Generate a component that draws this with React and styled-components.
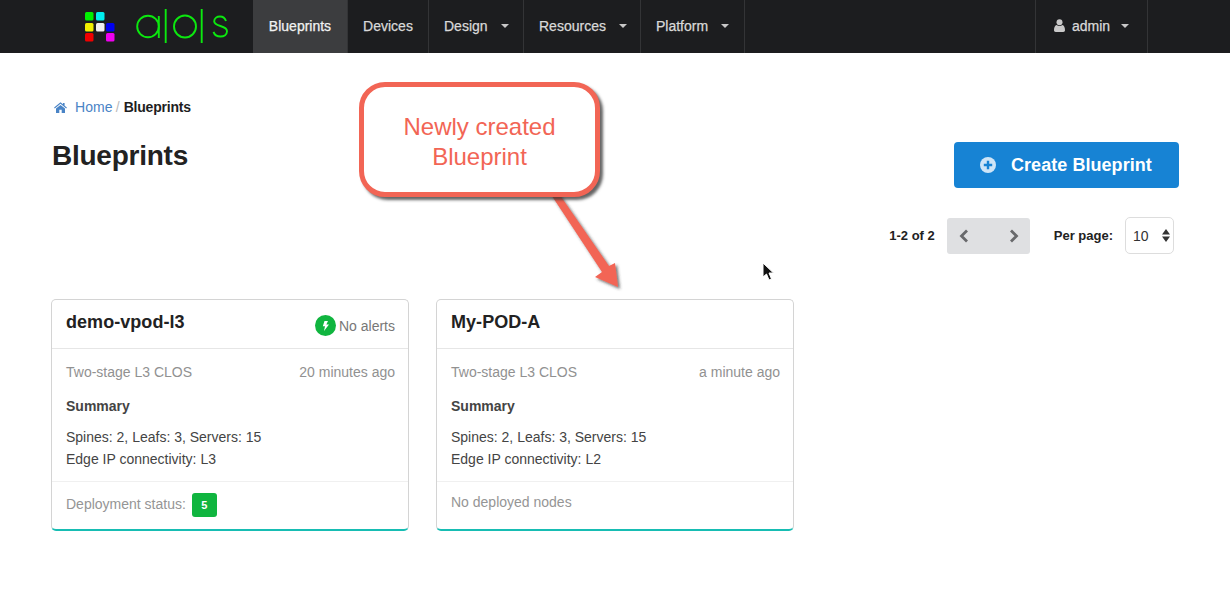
import React from "react";
import styled, { createGlobalStyle } from "styled-components";

const Global = createGlobalStyle`
  html, body { margin: 0; padding: 0; background: #fff; }
  body { font-family: "Liberation Sans", Arial, sans-serif; font-size: 14px; color: #222; overflow: hidden; }
  * { box-sizing: border-box; }
`;

const Page = styled.div`
  position: relative;
  width: 1230px;
  height: 596px;
  overflow: hidden;
`;
const Nav = styled.nav`
  display: flex;
  height: 53px;
  background: #1c1d1f;
  padding-left: 253px;
  position: relative;
`;
const LogoWrap = styled.div`
  position: absolute;
  left: 80px;
  top: 8px;
`;
const NavItem = styled.div`
  width: ${p => p.$w}px;
  height: 53px;
  display: flex;
  align-items: center;
  justify-content: ${p => (p.$caret ? "flex-start" : "center")};
  padding-left: ${p => (p.$caret ? 15 : 0)}px;
  padding-bottom: 2px;
  gap: 13px;
  font-size: 14px;
  color: ${p => (p.$active ? "#f2f2f2" : "#d9d9d9")};
  background: ${p => (p.$active ? "#3c3d3f" : "transparent")};
  border-right: 1px solid #333436;
  -webkit-text-stroke: 0.25px currentColor;
`;
const Spacer = styled.div`
  flex: 0 0 ${p => p.$w}px;
`;
const UserItem = styled(NavItem)`
  border-left: 1px solid #333436;
  padding-left: 18px;
  gap: 7px;
`;
const Caret = styled.span`
  width: 0;
  height: 0;
  margin-left: ${p => p.$ml ?? 0}px;
  border-left: 4px solid transparent;
  border-right: 4px solid transparent;
  border-top: 4px solid #c8c8c8;
`;
const Main = styled.main`
  padding: 46px 51px 0 51px;
`;
const Breadcrumb = styled.div`
  display: flex;
  align-items: center;
  height: 16px;
  padding-left: 3px;
  font-size: 14px;
  color: #1e1e1e;
`;
const HomeLink = styled.span`
  color: #4a84c6;
  margin-left: 8px;
  letter-spacing: 0.1px;
`;
const Sep = styled.span`
  color: #bbb;
  margin: 0 4px 0 3px;
`;
const Current = styled.strong`
  font-size: 14px;
  font-weight: 700;
  letter-spacing: -0.2px;
`;
const Head = styled.div`
  display: flex;
  justify-content: space-between;
  align-items: flex-start;
  margin-top: 19px;
`;
const Title = styled.h1`
  margin: 6px 0 0 1px;
  font-size: 28px;
  line-height: 32px;
  font-weight: 700;
  letter-spacing: -0.25px;
  color: #222;
`;
const CreateButton = styled.button`
  width: 225px;
  height: 46px;
  margin-top: 8px;
  border: 0;
  border-radius: 4px;
  background: #1783d4;
  color: #fff;
  font: 700 18px "Liberation Sans", Arial, sans-serif;
  letter-spacing: 0.05px;
  display: flex;
  align-items: center;
  padding: 0 0 0 26px;
  gap: 15px;
`;
const Pager = styled.div`
  display: flex;
  align-items: center;
  justify-content: flex-end;
  margin-top: 29px;
  padding-right: 5px;
  height: 37px;
`;
const Count = styled.span`
  font-size: 13px;
  font-weight: 700;
  color: #222;
`;
const PagerButtons = styled.div`
  width: 83px;
  height: 36px;
  margin-left: 12px;
  border-radius: 3px;
  background: #dfe0e2;
  display: flex;
  align-items: center;
  justify-content: space-between;
  padding: 0 11px 0 12px;
  color: #68696b;
`;
const PerPage = styled.span`
  font-size: 13px;
  font-weight: 700;
  margin-left: 24px;
  color: #222;
`;
const Select = styled.div`
  width: 49px;
  height: 37px;
  margin-left: 12px;
  border: 1px solid #ddd;
  border-radius: 5px;
  display: flex;
  align-items: center;
  justify-content: space-between;
  padding: 0 3px 0 7px;
  font-size: 14px;
  color: #333;
`;
const Cards = styled.div`
  display: flex;
  gap: 27px;
  margin-top: 45px;
`;
const Card = styled.article`
  height: 232px;
  width: 358px;
  border: 1px solid #d4d4d4;
  border-bottom: 2px solid #17bdb3;
  border-radius: 5px;
  display: flex;
  flex-direction: column;
`;
const CardHeader = styled.header`
  height: 49px;
  border-bottom: 1px solid #e6e6e6;
  display: flex;
  justify-content: space-between;
  padding: 12px 13px 0 14px;
`;
const CardTitle = styled.h2`
  margin: 0;
  font-size: 18px;
  line-height: 20px;
  font-weight: 700;
  letter-spacing: 0.05px;
  color: #222;
`;
const Alerts = styled.div`
  display: flex;
  align-items: center;
  gap: 3px;
  height: 21px;
  margin-top: 3px;
  color: #777;
  font-size: 14px;
`;
const AlertDot = styled.span`
  width: 21px;
  height: 21px;
  border-radius: 50%;
  background: #10b53f;
  display: flex;
  align-items: center;
  justify-content: center;
`;
const CardBody = styled.div`
  flex: 1;
  padding: 14px 13px 0 14px;
  border-bottom: 1px solid #f0f0f0;
`;
const MetaRow = styled.div`
  display: flex;
  justify-content: space-between;
  height: 18px;
  line-height: 18px;
  color: #919191;
  font-size: 14px;
`;
const Summary = styled.div`
  margin-top: 16px;
  line-height: 18px;
  font-size: 14px;
  font-weight: 700;
  color: #444;
`;
const Info = styled.div`
  margin-top: 11px;
  font-size: 14px;
  line-height: 22px;
  color: #444;
`;
const CardFooter = styled.footer`
  height: 47px;
  padding: 11px 14px 0;
  display: flex;
  align-items: flex-start;
  color: #959595;
  font-size: 14px;
  line-height: 18px;
`;
const StatusLine = styled.div`
  display: flex;
  align-items: flex-start;
  gap: 6px;
  height: 24px;
  line-height: 22px;
`;
const Badge = styled.span`
  width: 25px;
  height: 24px;
  border-radius: 3px;
  background: #10b53f;
  color: #fff;
  font-size: 11px;
  font-weight: 700;
  display: flex;
  align-items: center;
  justify-content: center;
`;
const Annotation = styled.svg`
  position: absolute;
  left: 350px;
  top: 75px;
  overflow: visible;
`;
const Callout = styled.div`
  position: absolute;
  left: 359px;
  top: 82px;
  width: 241px;
  height: 115px;
  border: 5px solid #f26555;
  border-radius: 26px;
  background: #fff;
  box-shadow: 3px 3px 3px rgba(50, 50, 50, 0.75);
  color: #f26555;
  font-size: 24px;
  line-height: 30px;
  text-align: center;
  padding-top: 25px;
`;
const CursorMark = styled.svg`
  position: absolute;
  left: 762px;
  top: 262px;
`;

const Logo = () => {
  const cells = [
    [85, 12, "#00f000"], [96, 12, "#00f0f0"],
    [85, 23, "#f0f000"], [96, 23, "#f0f0f0"], [106, 23, "#0000f0"],
    [85, 33, "#f00000"], [106, 33, "#f000f0"],
  ];
  return (
    <LogoWrap>
      <svg width="160" height="40" viewBox="80 8 160 40">
        {cells.map(([x, y, c]) => (
          <rect key={x + "-" + y} x={x} y={y} width="8.500" height="8.500" rx="1.500" fill={c} />
        ))}
        <g fill="none" stroke="#0ce80f" strokeWidth="1.900">
          <circle cx="148" cy="26.500" r="10.800" />
          <path d="M158.800 16v22" />
          <path d="M165.700 9v34" />
          <circle cx="185" cy="26.500" r="11" />
          <path d="M201.700 9v34" />
          <path d="M226 21c-1-3-3-4.500-6-4.500-3 0-5.800 1.600-5.800 4.800 0 6 12.800 3.400 12.800 10 0 3.300-3 5.200-6.500 5.200-3.300 0-6-1.500-7-4.600" />
        </g>
      </svg>
    </LogoWrap>
  );
};

const Home = () => (
  <svg width="13" height="11" viewBox="0 0 13 11" fill="#4a84c6">
    <path d="M6.500 0.300 0.100 5.600l0.700 0.800L6.500 1.800l5.700 4.600 0.700-0.800L10.600 3.700V1H9v1.300z" />
    <path d="M6.500 2.900 2 6.600V11h3.300V7.700h2.400V11H11V6.600z" />
  </svg>
);
const User = () => (
  <svg width="11" height="13" viewBox="0 0 11 13" fill="#c9c9c9">
    <circle cx="5.500" cy="3.300" r="3" />
    <path d="M0 11.300C0 8.300 1 6.300 2.600 6c.8.700 1.800 1 2.900 1s2.100-.3 2.900-1C10 6.300 11 8.300 11 11.300c0 1-.7 1.700-1.700 1.700H1.700C.7 13 0 12.300 0 11.300z" />
  </svg>
);
const Plus = () => (
  <svg width="16" height="16" viewBox="0 0 16 16">
    <circle cx="8" cy="8" r="8" fill="#cfe5f7" />
    <path d="M8 3.800v8.400M3.800 8h8.400" stroke="#1783d4" strokeWidth="2.400" />
  </svg>
);
const Chevron = ({ left }) => (
  <svg width="10" height="14" viewBox="0 0 10 14" fill="none" stroke="currentColor" strokeWidth="2.800">
    <path d={left ? "M8 1.500 2.500 7 8 12.500" : "M2 1.500 7.500 7 2 12.500"} />
  </svg>
);
const Updown = () => (
  <svg width="8" height="13" viewBox="0 0 8 13" fill="#333">
    <path d="M4 0 8 5.400H0zM4 13 0 7.600h8z" />
  </svg>
);
const Bolt = () => (
  <svg width="7" height="10" viewBox="0 0 7 10" fill="#fff">
    <path d="M2.500 0H6L4.300 3.500H7L2 10l1-4.800H0.800z" />
  </svg>
);

const BlueprintCard = ({ name, alerts, time, edge, children }) => (
  <Card>
    <CardHeader>
      <CardTitle>{name}</CardTitle>
      {alerts && (
        <Alerts>
          <AlertDot><Bolt /></AlertDot>
          No alerts
        </Alerts>
      )}
    </CardHeader>
    <CardBody>
      <MetaRow>
        <span>Two-stage L3 CLOS</span>
        <span>{time}</span>
      </MetaRow>
      <Summary>Summary</Summary>
      <Info>
        Spines: 2, Leafs: 3, Servers: 15
        <br />
        Edge IP connectivity: {edge}
      </Info>
    </CardBody>
    <CardFooter>{children}</CardFooter>
  </Card>
);

export default function App() {
  return (
    <Page>
      <Global />
      <Nav>
        <Logo />
        <NavItem $w={95} $active>Blueprints</NavItem>
        <NavItem $w={81}>Devices</NavItem>
        <NavItem $w={95} $caret>Design<Caret /></NavItem>
        <NavItem $w={117} $caret>Resources<Caret /></NavItem>
        <NavItem $w={104} $caret>Platform<Caret /></NavItem>
        <Spacer $w={290} />
        <UserItem $w={113} $caret>
          <User />
          admin
          <Caret $ml={4} />
        </UserItem>
      </Nav>
      <Main>
        <Breadcrumb>
          <Home />
          <HomeLink>Home</HomeLink>
          <Sep>/</Sep>
          <Current>Blueprints</Current>
        </Breadcrumb>
        <Head>
          <Title>Blueprints</Title>
          <CreateButton><Plus />Create Blueprint</CreateButton>
        </Head>
        <Pager>
          <Count>1-2 of 2</Count>
          <PagerButtons><Chevron left /><Chevron /></PagerButtons>
          <PerPage>Per page:</PerPage>
          <Select>10<Updown /></Select>
        </Pager>
        <Cards>
          <BlueprintCard name="demo-vpod-l3" alerts time="20 minutes ago" edge="L3">
            <StatusLine>Deployment status: <Badge>5</Badge></StatusLine>
          </BlueprintCard>
          <BlueprintCard name="My-POD-A" time="a minute ago" edge="L2">
            No deployed nodes
          </BlueprintCard>
        </Cards>
      </Main>
      <Annotation width="290" height="225" viewBox="0 0 290 225">
        <defs>
          <filter id="arrowShadow" x="-20%" y="-20%" width="150%" height="150%">
            <feDropShadow dx="2" dy="2" stdDeviation="1.500" floodColor="#333" floodOpacity="0.7" />
          </filter>
        </defs>
        <path
          d="M200 118 L252 197 L245 202 L268 212 L265 188 L259 191 L208.500 118 Z"
          fill="#f26555"
          filter="url(#arrowShadow)"
        />
      </Annotation>
      <Callout>Newly created<br />Blueprint</Callout>
      <CursorMark width="14" height="20" viewBox="0 0 14 20">
        <path d="M1 1v14l3.500-3 2.500 6 2.500-1-2.500-6h4.500z" fill="#111" stroke="#fff" strokeWidth="1" />
      </CursorMark>
    </Page>
  );
}
